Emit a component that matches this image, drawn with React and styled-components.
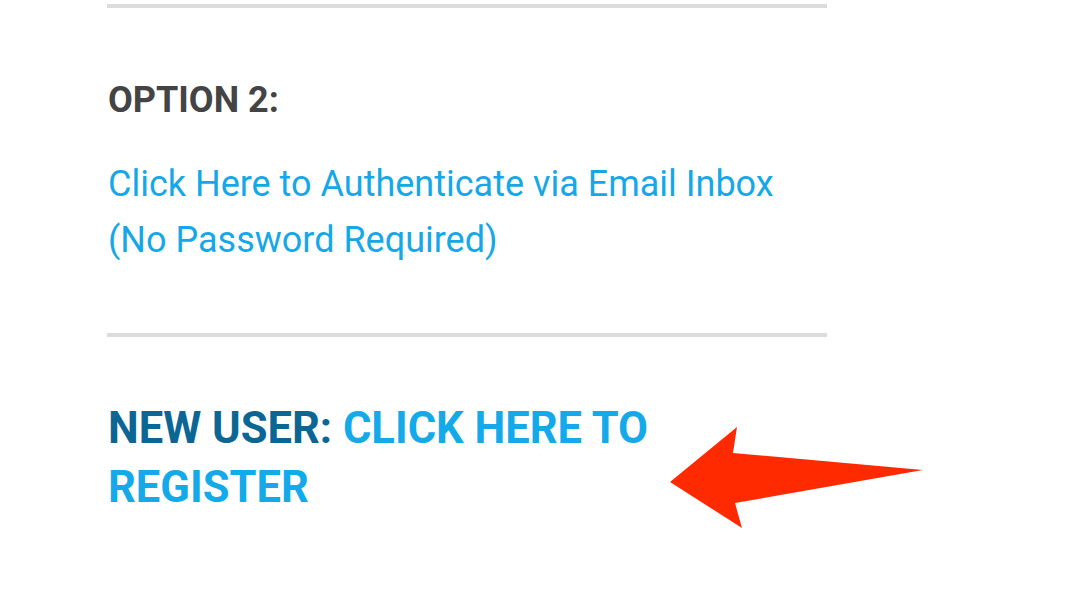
import React from "react";
import styled, { createGlobalStyle } from "styled-components";

const Global = createGlobalStyle`
  html, body { margin: 0; padding: 0; background: #fff; }
  body { font-family: Roboto, "Liberation Sans", Arial, sans-serif; }
`;

const Page = styled.div`
  position: relative;
  width: 1082px;
  height: 598px;
  overflow: hidden;
  background: #fff;
`;

const Column = styled.div`
  display: flex;
  flex-direction: column;
  width: 720px;
  margin-left: 107px;
  padding-top: 4px;
`;

const Divider = styled.div`
  height: 4px;
  background: #dcdcdc;
  margin-top: ${(p) => p.$top || 0}px;
`;

const Heading = styled.h3`
  margin: ${(p) => p.$top}px 0 0 1px;
  font-size: 36px;
  line-height: 56px;
  font-weight: 700;
  color: #444444;
`;

const LinkText = styled.a`
  display: block;
  margin: ${(p) => p.$top}px 0 0 1px;
  font-size: 36px;
  line-height: 56px;
  font-weight: 400;
  color: #16a8e6;
  text-decoration: none;
  width: 700px;
`;

const NewUser = styled.h2`
  margin: ${(p) => p.$top}px 0 0 1px;
  font-size: 43.5px;
  line-height: 58.5px;
  font-weight: 700;
  color: #0b6693;
  width: 560px;
`;

const Register = styled.a`
  color: #14a9e8;
  text-decoration: none;
`;

const Arrow = styled.svg`
  position: absolute;
  left: 660px;
  top: 420px;
`;

export default function App() {
  return (
    <Page>
      <Global />
      <Column>
        <Divider />
        <Heading $top={64}>OPTION 2:</Heading>
        <LinkText $top={28} href="#">
          Click Here to Authenticate via Email Inbox (No Password Required)
        </LinkText>
        <Divider $top={65} />
        <NewUser $top={63}>
          NEW USER: <Register href="#">CLICK HERE TO REGISTER</Register>
        </NewUser>
      </Column>
      <Arrow width="280" height="120" viewBox="0 0 280 120">
        <polygon
          points="10,62 77,7 73,33 263,50 75,83 82,108"
          fill="#ff2a00"
        />
      </Arrow>
    </Page>
  );
}
